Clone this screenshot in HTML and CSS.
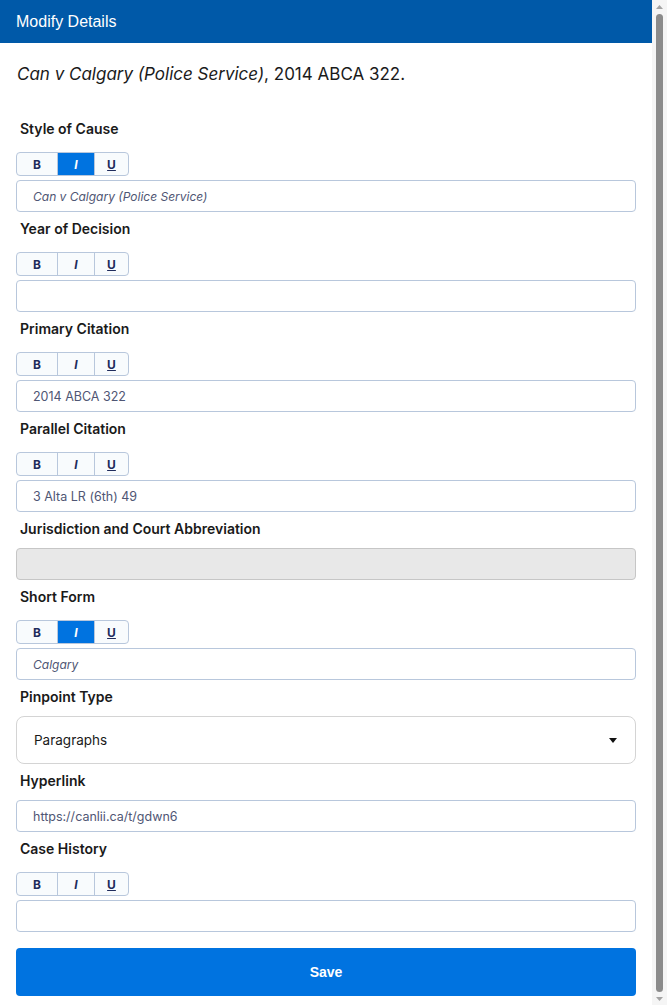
FILE: index.html
```html
<!DOCTYPE html>
<html lang="en">
<head>
    <meta charset="UTF-8">
    <meta name="viewport" content="width=device-width, initial-scale=1.0">
    <title>Modify Details</title>
    <link rel="stylesheet" href="styles.css">
</head>
<body>
    <div class="page">
        <div class="header">Modify Details</div>

        <div class="content">
            <p class="preview"><em>Can v Calgary (Police Service)</em>, 2014 ABCA 322.</p>

            <!-- Style of Cause -->
            <label class="field-label">Style of Cause</label>
            <div class="toolbar">
                <button class="tb-btn tb-b">B</button>
                <button class="tb-btn tb-i active">I</button>
                <button class="tb-btn tb-u">U</button>
            </div>
            <input class="field italic" type="text" value="Can v Calgary (Police Service)">

            <label class="field-label">Year of Decision</label>
            <div class="toolbar">
                <button class="tb-btn tb-b">B</button>
                <button class="tb-btn tb-i">I</button>
                <button class="tb-btn tb-u">U</button>
            </div>
            <input class="field" type="text" value="">

            <label class="field-label">Primary Citation</label>
            <div class="toolbar">
                <button class="tb-btn tb-b">B</button>
                <button class="tb-btn tb-i">I</button>
                <button class="tb-btn tb-u">U</button>
            </div>
            <input class="field" type="text" value="2014 ABCA 322">

            <label class="field-label">Parallel Citation</label>
            <div class="toolbar">
                <button class="tb-btn tb-b">B</button>
                <button class="tb-btn tb-i">I</button>
                <button class="tb-btn tb-u">U</button>
            </div>
            <input class="field" type="text" value="3 Alta LR (6th) 49">

            <label class="field-label">Jurisdiction and Court Abbreviation</label>
            <input class="field disabled" type="text" value="" disabled>

            <label class="field-label">Short Form</label>
            <div class="toolbar">
                <button class="tb-btn tb-b">B</button>
                <button class="tb-btn tb-i active">I</button>
                <button class="tb-btn tb-u">U</button>
            </div>
            <input class="field italic" type="text" value="Calgary">

            <label class="field-label">Pinpoint Type</label>
            <div class="select">
                <span>Paragraphs</span>
                <svg class="caret" width="10" height="6" viewBox="0 0 10 6"><path d="M0 0 L10 0 L5 6 Z" fill="#111"/></svg>
            </div>

            <label class="field-label">Hyperlink</label>
            <input class="field" type="text" value="https://canlii.ca/t/gdwn6">

            <label class="field-label">Case History</label>
            <div class="toolbar">
                <button class="tb-btn tb-b">B</button>
                <button class="tb-btn tb-i">I</button>
                <button class="tb-btn tb-u">U</button>
            </div>
            <input class="field" type="text" value="">

            <button class="save">Save</button>
        </div>
    </div>

    <!-- barre de défilement -->
    <div class="scrollbar">
        <svg class="sb-arrow" width="7" height="4" viewBox="0 0 7 4"><path d="M0 4 L3.5 0 L7 4 Z" fill="#a3a3a3"/></svg>
        <div class="sb-thumb"></div>
        <svg class="sb-arrow" width="7" height="4" viewBox="0 0 7 4"><path d="M0 0 L7 0 L3.5 4 Z" fill="#a3a3a3"/></svg>
    </div>
</body>
</html>
```

FILE: styles.css
```css
* {
    margin: 0;
    padding: 0;
    box-sizing: border-box;
}

body {
    display: flex;
    align-items: flex-start;
    font-family: Inter, Roboto, sans-serif;
    background-color: #fff;
    color: #1a1a1a;
}

.page {
    flex: 1;
}

.scrollbar {
    display: flex;
    flex-direction: column;
    align-items: center;
    width: 15px;
    height: 1005px;
    padding: 5px 0 4px;
    background-color: #f5f5f5;
    gap: 5px;
}

.sb-thumb {
    flex: 1;
    width: 7px;
    border-radius: 4px;
    background-color: #8b8b8b;
}

.header {
    height: 43px;
    background-color: #0059a8;
    color: #fff;
    font-family: "Liberation Sans", Arial, sans-serif;
    font-size: 16px;
    padding: 13px 16px 0;
}

.content {
    display: flex;
    flex-direction: column;
    padding: 0 16px 20px;
}

.preview {
    margin-top: 19px;
    margin-bottom: 33px;
    font-size: 17px;
    line-height: 24px;
    color: #1a1a1a;
    padding-left: 1px;
}

.field-label {
    display: block;
    font-size: 14px;
    font-weight: 600;
    line-height: 20px;
    padding-left: 4px;
    margin-bottom: 9px;
    color: #1a1a1a;
}

.toolbar {
    display: flex;
    width: 113px;
    height: 24px;
    margin-top: 4px;
    margin-bottom: 4px;
    border: 1px solid #b8c7dc;
    border-radius: 4px;
    overflow: hidden;
    background-color: #f8fbfd;
}

.tb-btn {
    border: none;
    border-right: 1px solid #b8c7dc;
    background: transparent;
    font-family: Inter, Roboto, sans-serif;
    font-size: 12px;
    font-weight: 700;
    color: #1f2b5c;
    cursor: pointer;
}

.tb-b {
    width: 41px;
}

.tb-i {
    width: 37px;
    font-style: italic;
}

.tb-u {
    flex: 1;
    border-right: none;
    text-decoration: underline;
}

.tb-btn.active {
    background-color: #0073e0;
    color: #fff;
}

.field {
    width: 100%;
    height: 32px;
    margin-bottom: 7px;
    padding: 0 16px;
    border: 1px solid #b8c7dc;
    border-radius: 4px;
    font-family: Inter, Roboto, sans-serif;
    font-size: 12.5px;
    color: #4f5674;
    background-color: #fff;
}

.field.italic {
    font-style: italic;
    font-size: 12px;
}

.field.disabled {
    background-color: #e8e8e8;
    border-color: #c6c6c6;
}

.select {
    display: flex;
    align-items: center;
    justify-content: space-between;
    height: 48px;
    margin-bottom: 7px;
    padding: 0 18px 0 17px;
    border: 1px solid #d4d4d4;
    border-radius: 8px;
    font-size: 13.5px;
    color: #1a1a1a;
}

.caret {
    width: 8px;
    height: 5px;
}

.save {
    height: 48px;
    margin-top: 9px;
    border: none;
    border-radius: 4px;
    background-color: #0073e0;
    color: #fff;
    font-family: "Liberation Sans", Arial, sans-serif;
    font-size: 14px;
    font-weight: bold;
    cursor: pointer;
}
```
